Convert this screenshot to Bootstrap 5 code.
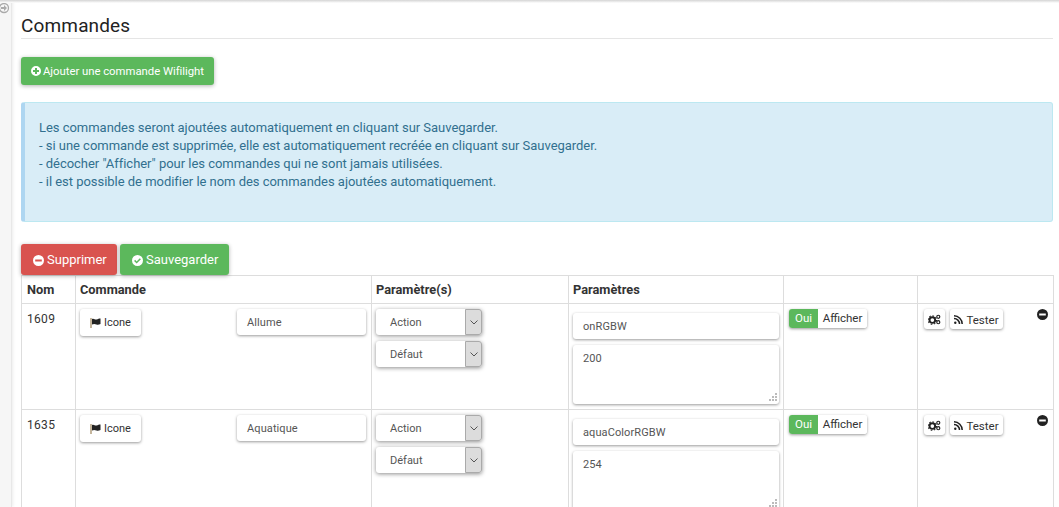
<!DOCTYPE html>
<html lang="fr">
<head>
<meta charset="UTF-8">
<title>Commandes</title>
<link rel="stylesheet" href="https://cdn.jsdelivr.net/npm/bootstrap@5.3.0/dist/css/bootstrap.min.css">
<style>
html, body { height: 507px; overflow: hidden; }
body { font-family: Roboto, "Liberation Sans", sans-serif; font-size: 12px; color: #333; background: #fff; }
.page-wrap { height: 507px; }
.side-strip { width: 12px; flex: none; background: #f6f6f6; border-right: 1px solid #e8e8e8; box-shadow: 1px 0 3px rgba(0,0,0,.08); padding-top: 2px; }
.side-strip svg { display: block; margin-left: -2px; }
.top-shade { height: 3px; background: linear-gradient(#d4d4d4, #fff); position: absolute; top: 0; left: 0; right: 0; z-index: 2; }
.main-area { flex: 1; padding: 15px 6px 0 9px; min-width: 0; }
.page-title { font-size: 19px; font-weight: 400; line-height: 21px; letter-spacing: .15px; color: #222; margin: 0; padding-bottom: 2px; border-bottom: 1px solid #e5e5e5; margin-bottom: 18px; }
.btn-flat { border: 0; border-radius: 3px; color: #fff; box-shadow: 0 1px 4px rgba(0,0,0,.3); font-size: 12px; line-height: 16px; display: inline-flex; align-items: center; gap: 3px; white-space: nowrap; }
.btn-flat svg { flex: none; }
.btn-add { background: #5cb85c; height: 28px; padding: 0 10px; width: 193px; font-size: 11.35px; letter-spacing: -.03px; gap: 2px; }
.btn-big { height: 31px; font-size: 13px; padding: 1px 12px 0; }
.btn-del { background: #d9534f; width: 96px; }
.btn-save { background: #5cb85c; width: 109px; }
.btn-add:hover, .btn-save:hover { background: #5cb85c; color: #fff; }
.btn-del:hover { background: #d9534f; color: #fff; }
.info-box { background: #d9edf7; border: 1px solid #bce8f1; border-left: 4px solid #aed6f1; border-radius: 3px; color: #31708f; height: 120px; margin: 17px 0 22px; padding: 16px 14px; font-size: 13px; line-height: 18px; letter-spacing: -.03px; }
.btn-row { gap: 3px; }
.cmd-table { table-layout: fixed; width: 1032px; border-collapse: collapse; margin: 0; }
.cmd-table th, .cmd-table td { border: 1px solid #ddd; padding: 5px 4px 4px; vertical-align: top; font-size: 12px; color: #333; box-shadow: none; background: #fff; }
.cmd-table th { font-weight: 700; font-size: 12.8px; height: 28px; line-height: 19px; padding-top: 4px; }
.cmd-table th:first-child, .cmd-table td:first-child, .cmd-table td.pad-five { padding-left: 5px; }
.cmd-table td.actions-cell { padding-left: 6px; }
.cmd-table td.cmd-cell { padding-right: 5px; }
.cmd-table .row-cmd { height: 106px; }
.cmd-id { display: block; padding-top: 1px; font-size: 12px; letter-spacing: .3px; }
.white-btn { background: #fff; border: 0; border-radius: 3px; box-shadow: 0 1px 3px rgba(0,0,0,.4); color: #333; font-size: 11px; line-height: 14px; display: inline-flex; align-items: center; gap: 3px; vertical-align: top; }
.btn-icone { height: 27px; width: 61px; padding: 1px 0 0 10px; }
.btn-gear { height: 20px; width: 21px; justify-content: center; padding: 0; }
.btn-test { height: 20px; width: 53px; justify-content: center; padding: 1px 0 0; margin-left: 5px; font-size: 11.5px; }
.fake-input { background: #fff; border: 0; border-radius: 3px; box-shadow: 0 1px 3px rgba(0,0,0,.4); height: 26px; line-height: 28px; padding: 0 10px; font-size: 11px; color: #555; letter-spacing: .1px; }
.name-input { width: 129px; }
.fake-select { width: 106px; height: 26px; background: #fff; border-radius: 3px; box-shadow: 0 1px 4px rgba(0,0,0,.45); font-size: 11px; color: #555; padding-left: 14px; line-height: 28px; position: relative; margin-bottom: 6px; }
.select-arrow { position: absolute; right: 0; top: 0; width: 17px; height: 26px; background: #dcdcdc; border: 1px solid #aaa; border-radius: 0 3px 3px 0; display: flex; align-items: center; justify-content: center; }
.param-wrap { padding-top: 4px; }
.fake-area { height: 59px; margin-top: 6px; line-height: 14px; padding: 7px 10px; position: relative; }
.grip { position: absolute; right: 2px; bottom: 2px; }
.toggle-box { display: inline-flex; height: 19px; border-radius: 3px; box-shadow: 0 1px 3px rgba(0,0,0,.4); font-size: 11.5px; line-height: 19px; overflow: hidden; vertical-align: top; }
.toggle-on { background: #5cb85c; color: #fff; width: 29px; text-align: center; }
.toggle-off { background: #fff; color: #333; width: 49px; text-align: center; }
.remove-icon { position: absolute; right: 5px; top: 5px; line-height: 0; }
.actions-cell { position: relative; }
</style>
</head>
<body>
<div class="top-shade"></div>
<div class="page-wrap d-flex">
  <div class="side-strip">
    <svg width="12" height="12" viewBox="0 0 12 12"><circle cx="6" cy="6" r="4.5" fill="none" stroke="#aaa" stroke-width="1.3"/><path d="M3 5h3V3l3 3-3 3V7H3z" fill="#aaa"/></svg>
  </div>
  <div class="main-area">
    <h3 class="page-title">Commandes</h3>
    <button class="btn btn-flat btn-add">
      <svg width="10" height="10" viewBox="0 0 10 10"><path fill="#fff" fill-rule="evenodd" d="M5 0a5 5 0 1 0 0 10A5 5 0 0 0 5 0zM4 2h2v2h2v2H6v2H4V6H2V4h2z"/></svg>
      Ajouter une commande Wifilight
    </button>
    <div class="info-box">
      Les commandes seront ajoutées automatiquement en cliquant sur Sauvegarder.<br>
      - si une commande est supprimée, elle est automatiquement recréée en cliquant sur Sauvegarder.<br>
      - décocher "Afficher" pour les commandes qui ne sont jamais utilisées.<br>
      - il est possible de modifier le nom des commandes ajoutées automatiquement.
    </div>
    <div class="d-flex btn-row mb-0">
      <button class="btn btn-flat btn-big btn-del">
        <svg width="11" height="11" viewBox="0 0 10 10"><path fill="#fff" fill-rule="evenodd" d="M5 0a5 5 0 1 0 0 10A5 5 0 0 0 5 0zM2 4h6v2H2z"/></svg>
        Supprimer
      </button>
      <button class="btn btn-flat btn-big btn-save">
        <svg width="11" height="11" viewBox="0 0 10 10"><path fill="#fff" fill-rule="evenodd" d="M5 0a5 5 0 1 0 0 10A5 5 0 0 0 5 0zM4.2 7.8L1.9 5.4l1-1 1.300 1.400 2.900-2.900 1 1z"/></svg>
        Sauvegarder
      </button>
    </div>
    <table class="table cmd-table">
      <colgroup>
        <col style="width:54px"><col style="width:296px"><col style="width:197px"><col style="width:215px"><col style="width:134px"><col style="width:136px">
      </colgroup>
      <thead>
        <tr><th>Nom</th><th>Commande</th><th>Paramètre(s)</th><th>Paramètres</th><th></th><th></th></tr>
      </thead>
      <tbody id="cmdRows"></tbody>
    </table>
  </div>
</div>
<script src="https://cdn.jsdelivr.net/npm/bootstrap@5.3.0/dist/js/bootstrap.bundle.min.js"></script>
<script>
    const cmds = [
        { id: 1609, name: "Allume", logical: "onRGBW", value: "200" },
        { id: 1635, name: "Aquatique", logical: "aquaColorRGBW", value: "254" }
    ];
    const arrow = '<span class="select-arrow"><svg width="8" height="5" viewBox="0 0 8 5"><path d="M.5.5L4 4 7.5.5" fill="none" stroke="#555"/></svg></span>';
    const flag = '<svg width="11" height="10" viewBox="0 0 11 10"><path d="M1 0v10" stroke="#8a6d3b" stroke-width="1"/><path d="M2 1c2-1 3 1 4.500 .5S9 .5 10.500 .5V6C9 6.500 8 7 6.500 6.500S4 5.500 2 6.500z" fill="#222"/></svg>';
    const gears = '<svg width="13" height="11" viewBox="0 0 12 10"><circle cx="4" cy="5.500" r="2.600" fill="none" stroke="#222" stroke-width="1.800"/><circle cx="4" cy="5.500" r="3.900" fill="none" stroke="#222" stroke-width="1" stroke-dasharray="1.500 1.500"/><circle cx="9.500" cy="2.500" r="1.400" fill="none" stroke="#222" stroke-width="1.100"/><circle cx="9.500" cy="7.500" r="1.400" fill="none" stroke="#222" stroke-width="1.100"/></svg>';
    const rss = '<svg width="9" height="9" viewBox="0 0 9 9"><circle cx="1.300" cy="7.700" r="1.200" fill="#222"/><path d="M0 3.500A5.500 5.500 0 0 1 5.500 9M0 .8A8.200 8.200 0 0 1 8.200 9" fill="none" stroke="#222" stroke-width="1.500"/></svg>';
    const minus = '<svg width="11" height="11" viewBox="0 0 10 10"><path fill="#222" fill-rule="evenodd" d="M5 0a5 5 0 1 0 0 10A5 5 0 0 0 5 0zM2 4h6v2H2z"/></svg>';
    const grip = '<svg class="grip" width="9" height="9" viewBox="0 0 9 9"><path d="M7 0h2v2H7zM4 3h2v2H4zM7 3h2v2H7zM1 6h2v2H1zM4 6h2v2H4zM7 6h2v2H7z" fill="#bbb"/></svg>';
    document.getElementById("cmdRows").innerHTML = cmds.map(c => `
        <tr class="row-cmd">
            <td><span class="cmd-id">${c.id}</span></td>
            <td class="cmd-cell">
                <div class="d-flex justify-content-between">
                    <button class="white-btn btn-icone">${flag} Icone</button>
                    <div class="fake-input name-input">${c.name}</div>
                </div>
            </td>
            <td>
                <div class="fake-select">Action${arrow}</div>
                <div class="fake-select">Défaut${arrow}</div>
            </td>
            <td>
                <div class="param-wrap">
                    <div class="fake-input">${c.logical}</div>
                    <div class="fake-input fake-area">${c.value}${grip}</div>
                </div>
            </td>
            <td class="pad-five">
                <div class="toggle-box"><span class="toggle-on">Oui</span><span class="toggle-off">Afficher</span></div>
            </td>
            <td class="actions-cell">
                <button class="white-btn btn-gear">${gears}</button><button class="white-btn btn-test">${rss} Tester</button>
                <span class="remove-icon">${minus}</span>
            </td>
        </tr>`).join("");
</script>
</body>
</html>
